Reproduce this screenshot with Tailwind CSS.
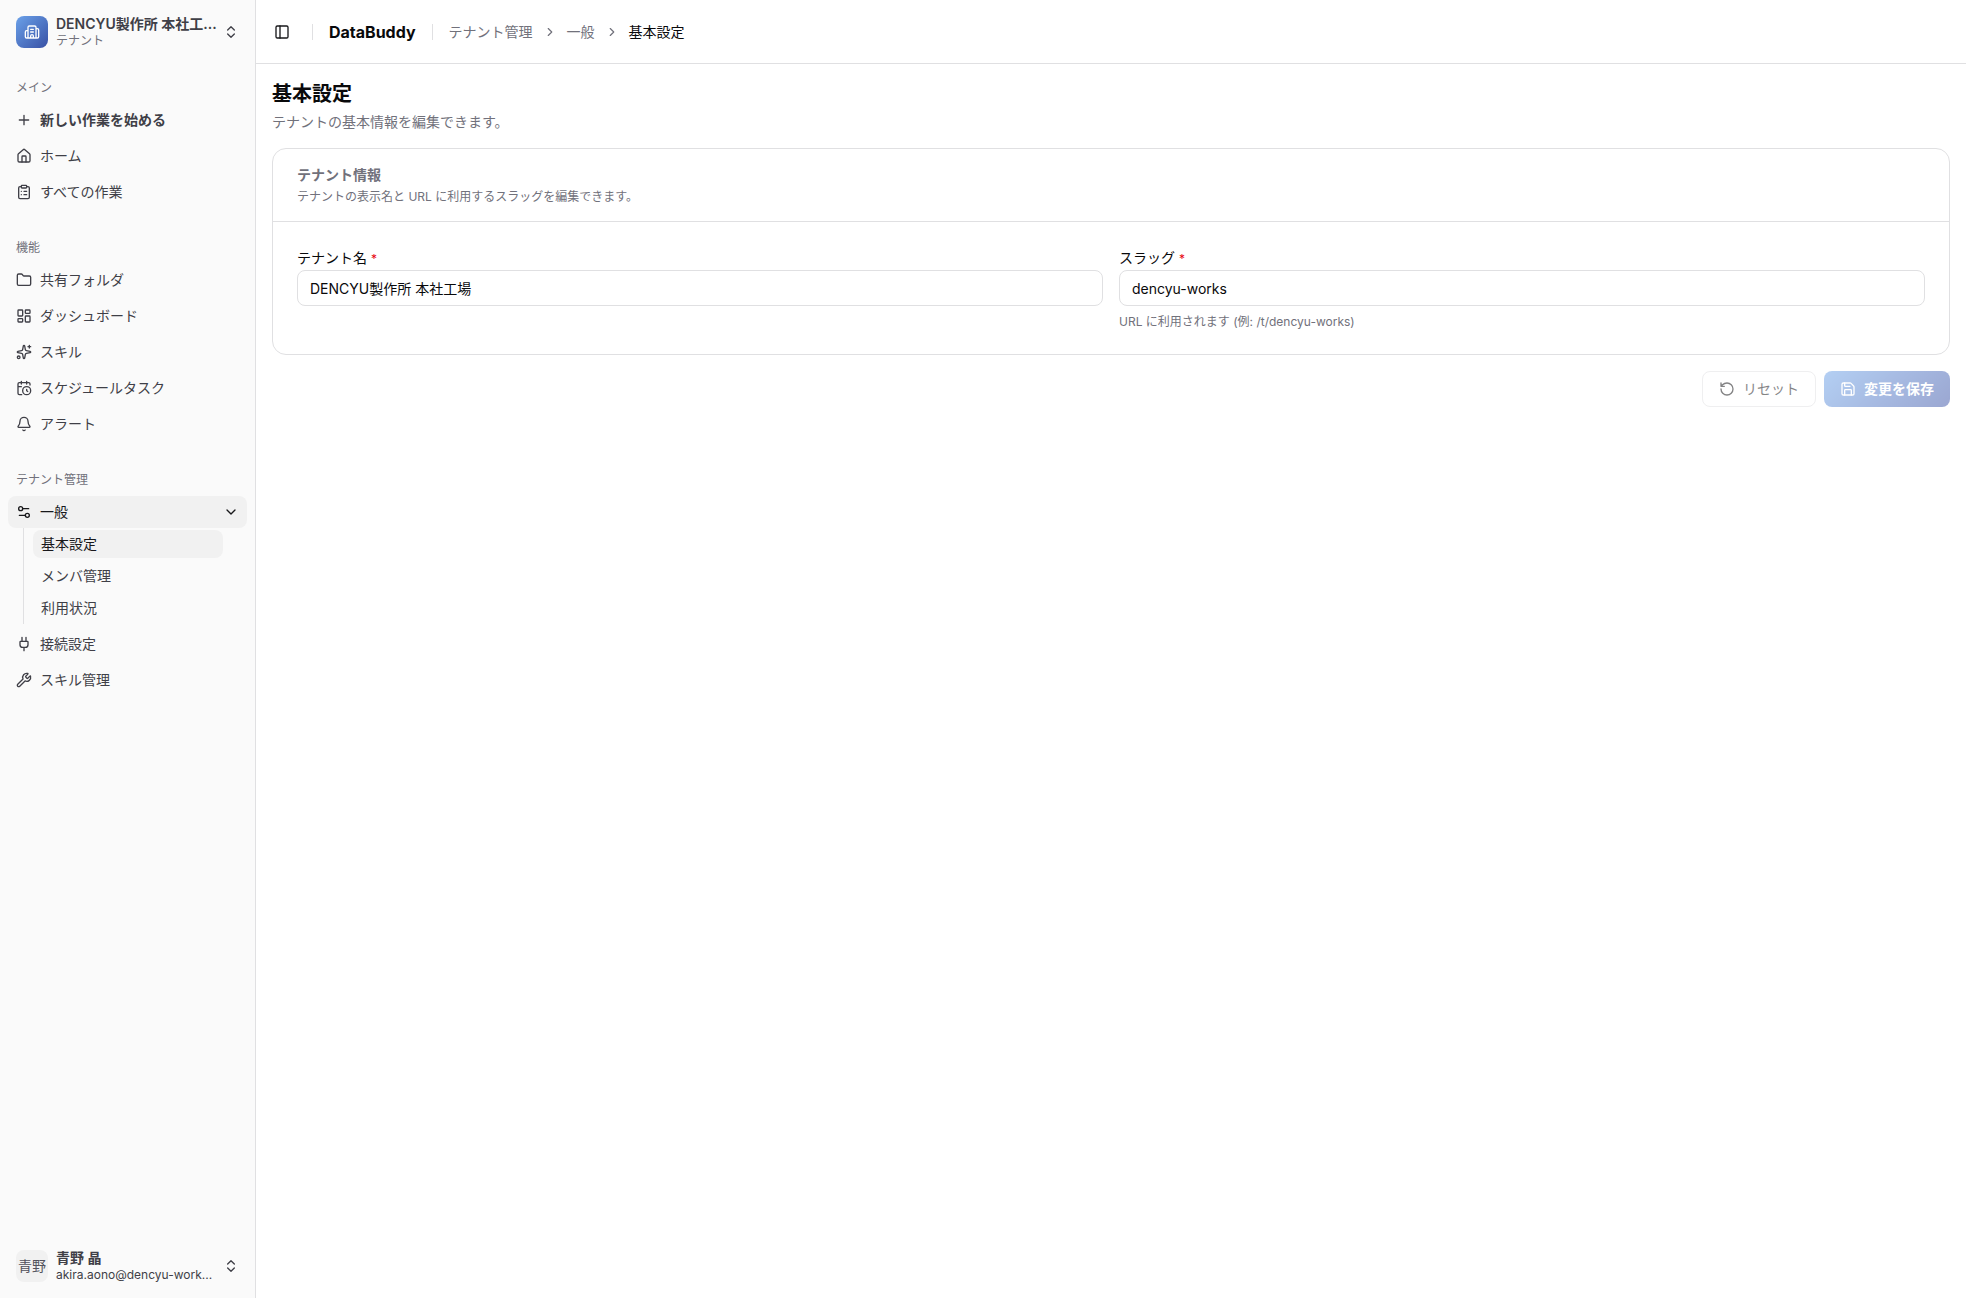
<!DOCTYPE html>
<html lang="ja">
<head>
    <meta charset="UTF-8">
    <meta name="viewport" content="width=device-width, initial-scale=1.0">
    <title>基本設定 - DataBuddy</title>
    <script src="https://cdn.jsdelivr.net/npm/@tailwindcss/browser@4"></script>
    <style>
        body {
            font-family: Inter, 'Noto Sans CJK JP', sans-serif;
        }
    </style>
</head>
<body class="flex min-h-screen bg-white text-sm text-zinc-950 antialiased">
    <!-- icon sprite -->
    <svg class="hidden" xmlns="http://www.w3.org/2000/svg">
        <symbol id="i-building" viewBox="0 0 24 24"><path d="M10 12h4M10 8h4M14 21v-3a2 2 0 0 0-4 0v3M6 10H4a2 2 0 0 0-2 2v7a2 2 0 0 0 2 2h16a2 2 0 0 0 2-2V9a2 2 0 0 0-2-2h-2M6 21V5a2 2 0 0 1 2-2h8a2 2 0 0 1 2 2v16"/></symbol>
        <symbol id="i-updown" viewBox="0 0 24 24"><path d="m7 15 5 5 5-5M7 9l5-5 5 5"/></symbol>
        <symbol id="i-plus" viewBox="0 0 24 24"><path d="M5 12h14M12 5v14"/></symbol>
        <symbol id="i-home" viewBox="0 0 24 24"><path d="M15 21v-8a1 1 0 0 0-1-1h-4a1 1 0 0 0-1 1v8"/><path d="M3 10a2 2 0 0 1 .709-1.528l7-6a2 2 0 0 1 2.582 0l7 6A2 2 0 0 1 21 10v9a2 2 0 0 1-2 2H5a2 2 0 0 1-2-2z"/></symbol>
        <symbol id="i-clipboard" viewBox="0 0 24 24"><rect width="8" height="4" x="8" y="2" rx="1"/><path d="M16 4h2a2 2 0 0 1 2 2v14a2 2 0 0 1-2 2H6a2 2 0 0 1-2-2V6a2 2 0 0 1 2-2h2M12 11h4M12 16h4M8 11h.01M8 16h.01"/></symbol>
        <symbol id="i-folder" viewBox="0 0 24 24"><path d="M20 20a2 2 0 0 0 2-2V8a2 2 0 0 0-2-2h-7.9a2 2 0 0 1-1.69-.9L9.6 3.9A2 2 0 0 0 7.93 3H4a2 2 0 0 0-2 2v13a2 2 0 0 0 2 2Z"/></symbol>
        <symbol id="i-dashboard" viewBox="0 0 24 24"><rect width="7" height="9" x="3" y="3" rx="1"/><rect width="7" height="5" x="14" y="3" rx="1"/><rect width="7" height="9" x="14" y="12" rx="1"/><rect width="7" height="5" x="3" y="16" rx="1"/></symbol>
        <symbol id="i-sparkles" viewBox="0 0 24 24"><path d="M11.017 2.814a1 1 0 0 1 1.966 0l1.051 5.558a2 2 0 0 0 1.594 1.594l5.558 1.051a1 1 0 0 1 0 1.966l-5.558 1.051a2 2 0 0 0-1.594 1.594l-1.051 5.558a1 1 0 0 1-1.966 0l-1.051-5.558a2 2 0 0 0-1.594-1.594l-5.558-1.051a1 1 0 0 1 0-1.966l5.558-1.051a2 2 0 0 0 1.594-1.594zM20 2v4M22 4h-4"/><circle cx="4" cy="20" r="2"/></symbol>
        <symbol id="i-calendar" viewBox="0 0 24 24"><path d="M16 14v2.2l1.6 1M16 2v4M21 7.5V6a2 2 0 0 0-2-2H5a2 2 0 0 0-2 2v14a2 2 0 0 0 2 2h3.5M3 10h5M8 2v4"/><circle cx="16" cy="16" r="6"/></symbol>
        <symbol id="i-bell" viewBox="0 0 24 24"><path d="M10.268 21a2 2 0 0 0 3.464 0M3.262 15.326A1 1 0 0 0 4 17h16a1 1 0 0 0 .74-1.673C19.41 13.956 18 12.499 18 8A6 6 0 0 0 6 8c0 4.499-1.411 5.956-2.738 7.326"/></symbol>
        <symbol id="i-settings" viewBox="0 0 24 24"><path d="M14 17H5M19 7h-9"/><circle cx="17" cy="17" r="3"/><circle cx="7" cy="7" r="3"/></symbol>
        <symbol id="i-down" viewBox="0 0 24 24"><path d="m6 9 6 6 6-6"/></symbol>
        <symbol id="i-right" viewBox="0 0 24 24"><path d="m9 18 6-6-6-6"/></symbol>
        <symbol id="i-plug" viewBox="0 0 24 24"><path d="M12 22v-5M15 8V2M17 8a1 1 0 0 1 1 1v4a4 4 0 0 1-4 4h-4a4 4 0 0 1-4-4V9a1 1 0 0 1 1-1zM9 8V2"/></symbol>
        <symbol id="i-wrench" viewBox="0 0 24 24"><path d="M14.7 6.3a1 1 0 0 0 0 1.4l1.6 1.6a1 1 0 0 0 1.4 0l3.106-3.105c.32-.322.863-.22.983.218a6 6 0 0 1-8.259 7.057l-7.91 7.91a1 1 0 0 1-2.999-3l7.91-7.91a6 6 0 0 1 7.057-8.259c.438.12.54.662.219.984z"/></symbol>
        <symbol id="i-panel" viewBox="0 0 24 24"><rect width="18" height="18" x="3" y="3" rx="2"/><path d="M9 3v18"/></symbol>
        <symbol id="i-reset" viewBox="0 0 24 24"><path d="M3 12a9 9 0 1 0 9-9 9.75 9.75 0 0 0-6.74 2.74L3 8M3 3v5h5"/></symbol>
        <symbol id="i-save" viewBox="0 0 24 24"><path d="M15.2 3a2 2 0 0 1 1.4.6l3.8 3.8a2 2 0 0 1 .6 1.4V19a2 2 0 0 1-2 2H5a2 2 0 0 1-2-2V5a2 2 0 0 1 2-2z"/><path d="M17 21v-7a1 1 0 0 0-1-1H8a1 1 0 0 0-1 1v7M7 3v4a1 1 0 0 0 1 1h7"/></symbol>
    </svg>

    <aside class="sticky top-0 flex h-screen w-64 shrink-0 flex-col border-r border-[#e0e0e2] bg-[#fafafa] text-zinc-700">
        <div class="p-2">
            <button type="button" class="flex h-12 w-full items-center rounded-lg p-2 text-left hover:bg-zinc-100">
                <span class="mr-2 flex size-8 shrink-0 items-center justify-center rounded-lg bg-linear-135 from-[#6ba1e9] to-[#3951a5] text-white">
                    <svg class="size-4 fill-none stroke-current stroke-2" stroke-linecap="round" stroke-linejoin="round"><use href="#i-building"/></svg>
                </span>
                <span class="grid min-w-0 flex-1">
                    <span class="leading-[18px] font-semibold whitespace-nowrap">DENCYU製作所 本社工...</span>
                    <span class="truncate text-xs text-zinc-500">テナント</span>
                </span>
                <svg class="size-4 shrink-0 fill-none stroke-current stroke-2" stroke-linecap="round" stroke-linejoin="round"><use href="#i-updown"/></svg>
            </button>
        </div>

        <nav class="flex flex-1 flex-col gap-2 overflow-y-auto">
            <section class="p-2">
                <h2 class="flex h-8 items-center px-2 text-xs text-zinc-500">メイン</h2>
                <ul class="flex flex-col gap-1">
                    <li><a href="#" class="flex h-8 items-center gap-2 rounded-lg px-2 font-semibold hover:bg-zinc-100"><svg class="size-4 fill-none stroke-current stroke-2" stroke-linecap="round" stroke-linejoin="round"><use href="#i-plus"/></svg>新しい作業を始める</a></li>
                    <li><a href="#" class="flex h-8 items-center gap-2 rounded-lg px-2 hover:bg-zinc-100"><svg class="size-4 fill-none stroke-current stroke-2" stroke-linecap="round" stroke-linejoin="round"><use href="#i-home"/></svg>ホーム</a></li>
                    <li><a href="#" class="flex h-8 items-center gap-2 rounded-lg px-2 hover:bg-zinc-100"><svg class="size-4 fill-none stroke-current stroke-2" stroke-linecap="round" stroke-linejoin="round"><use href="#i-clipboard"/></svg>すべての作業</a></li>
                </ul>
            </section>

            <section class="p-2">
                <h2 class="flex h-8 items-center px-2 text-xs text-zinc-500">機能</h2>
                <ul class="flex flex-col gap-1">
                    <li><a href="#" class="flex h-8 items-center gap-2 rounded-lg px-2 hover:bg-zinc-100"><svg class="size-4 fill-none stroke-current stroke-2" stroke-linecap="round" stroke-linejoin="round"><use href="#i-folder"/></svg>共有フォルダ</a></li>
                    <li><a href="#" class="flex h-8 items-center gap-2 rounded-lg px-2 hover:bg-zinc-100"><svg class="size-4 fill-none stroke-current stroke-2" stroke-linecap="round" stroke-linejoin="round"><use href="#i-dashboard"/></svg>ダッシュボード</a></li>
                    <li><a href="#" class="flex h-8 items-center gap-2 rounded-lg px-2 hover:bg-zinc-100"><svg class="size-4 fill-none stroke-current stroke-2" stroke-linecap="round" stroke-linejoin="round"><use href="#i-sparkles"/></svg>スキル</a></li>
                    <li><a href="#" class="flex h-8 items-center gap-2 rounded-lg px-2 hover:bg-zinc-100"><svg class="size-4 fill-none stroke-current stroke-2" stroke-linecap="round" stroke-linejoin="round"><use href="#i-calendar"/></svg>スケジュールタスク</a></li>
                    <li><a href="#" class="flex h-8 items-center gap-2 rounded-lg px-2 hover:bg-zinc-100"><svg class="size-4 fill-none stroke-current stroke-2" stroke-linecap="round" stroke-linejoin="round"><use href="#i-bell"/></svg>アラート</a></li>
                </ul>
            </section>

            <section class="p-2">
                <h2 class="flex h-8 items-center px-2 text-xs text-zinc-500">テナント管理</h2>
                <ul class="flex flex-col gap-1">
                    <li>
                        <button type="button" aria-expanded="true" class="flex h-8 w-full items-center gap-2 rounded-lg bg-[#f1f1f1] px-2 text-left text-zinc-900">
                            <svg class="size-4 fill-none stroke-current stroke-2" stroke-linecap="round" stroke-linejoin="round"><use href="#i-settings"/></svg>
                            <span class="flex-1">一般</span>
                            <svg class="size-4 fill-none stroke-current stroke-2" stroke-linecap="round" stroke-linejoin="round"><use href="#i-down"/></svg>
                        </button>
                        <ul class="mr-6 ml-[15px] flex flex-col gap-1 border-l border-[#e0e0e2] py-0.5 pl-[9px]">
                            <li><a href="#" aria-current="page" class="flex h-7 items-center rounded-lg bg-[#f1f1f1] px-2 text-zinc-900">基本設定</a></li>
                            <li><a href="#" class="flex h-7 items-center rounded-lg px-2 hover:bg-zinc-100">メンバ管理</a></li>
                            <li><a href="#" class="flex h-7 items-center rounded-lg px-2 hover:bg-zinc-100">利用状況</a></li>
                        </ul>
                    </li>
                    <li><a href="#" class="flex h-8 items-center gap-2 rounded-lg px-2 hover:bg-zinc-100"><svg class="size-4 fill-none stroke-current stroke-2" stroke-linecap="round" stroke-linejoin="round"><use href="#i-plug"/></svg>接続設定</a></li>
                    <li><a href="#" class="flex h-8 items-center gap-2 rounded-lg px-2 hover:bg-zinc-100"><svg class="size-4 fill-none stroke-current stroke-2" stroke-linecap="round" stroke-linejoin="round"><use href="#i-wrench"/></svg>スキル管理</a></li>
                </ul>
            </section>
        </nav>

        <div class="p-2">
            <button type="button" class="flex h-12 w-full items-center gap-2 rounded-lg p-2 text-left hover:bg-zinc-100">
                <span class="flex size-8 shrink-0 items-center justify-center rounded-lg bg-[#f1f1f1] text-zinc-600">青野</span>
                <span class="grid min-w-0 flex-1">
                    <span class="truncate leading-[18px] font-semibold">青野 晶</span>
                    <span class="text-xs whitespace-nowrap">akira.aono@dencyu-work...</span>
                </span>
                <svg class="size-4 shrink-0 fill-none stroke-current stroke-2" stroke-linecap="round" stroke-linejoin="round"><use href="#i-updown"/></svg>
            </button>
        </div>
    </aside>

    <div class="min-w-0 flex-1">
        <header class="flex h-16 items-center gap-4 border-b border-[#e0e0e2] px-3">
            <button type="button" aria-label="サイドバーを切り替え" class="flex size-7 items-center justify-center rounded-lg text-zinc-900 hover:bg-zinc-100">
                <svg class="size-4 fill-none stroke-current stroke-2" stroke-linecap="round" stroke-linejoin="round"><use href="#i-panel"/></svg>
            </button>
            <span class="h-4 w-px bg-[#e0e0e2]"></span>
            <a href="#" class="text-base font-bold">DataBuddy</a>
            <span class="h-4 w-px bg-[#e0e0e2]"></span>
            <nav>
                <ol class="flex items-center gap-2.5 text-zinc-500">
                    <li><a href="#" class="hover:text-zinc-950">テナント管理</a></li>
                    <li aria-hidden="true"><svg class="size-3.5 fill-none stroke-current stroke-2" stroke-linecap="round" stroke-linejoin="round"><use href="#i-right"/></svg></li>
                    <li><a href="#" class="hover:text-zinc-950">一般</a></li>
                    <li aria-hidden="true"><svg class="size-3.5 fill-none stroke-current stroke-2" stroke-linecap="round" stroke-linejoin="round"><use href="#i-right"/></svg></li>
                    <li aria-current="page" class="text-zinc-950">基本設定</li>
                </ol>
            </nav>
        </header>

        <main class="flex flex-col gap-4 p-4">
            <div>
                <h1 class="text-xl leading-7 font-bold">基本設定</h1>
                <p class="mt-1 text-zinc-500">テナントの基本情報を編集できます。</p>
            </div>

            <form class="flex flex-col gap-4">
                <section class="rounded-[14px] border border-[#e0e0e2]">
                    <div class="border-b border-[#e0e0e2] px-6 py-4 text-zinc-500">
                        <h2 class="font-semibold">テナント情報</h2>
                        <p class="mt-1 text-xs">テナントの表示名と URL に利用するスラッグを編集できます。</p>
                    </div>
                    <div class="grid grid-cols-2 gap-4 p-6">
                        <div>
                            <label for="tenant-name" class="block leading-6">テナント名 <span class="text-xs text-red-600">*</span></label>
                            <input id="tenant-name" type="text" value="DENCYU製作所 本社工場" required class="h-9 w-full rounded-lg border border-[#e0e0e2] px-3 outline-none focus:ring-2 focus:ring-blue-300">
                        </div>
                        <div>
                            <label for="tenant-slug" class="block leading-6">スラッグ <span class="text-xs text-red-600">*</span></label>
                            <input id="tenant-slug" type="text" value="dencyu-works" required class="h-9 w-full rounded-lg border border-[#e0e0e2] px-3 outline-none focus:ring-2 focus:ring-blue-300">
                            <p class="mt-2 text-xs text-zinc-500">URL に利用されます (例: /t/dencyu-works)</p>
                        </div>
                    </div>
                </section>

                <div class="flex justify-end gap-2">
                    <button type="reset" disabled class="flex h-9 items-center gap-2 rounded-lg border border-[#e0e0e2] px-4 disabled:opacity-50">
                        <svg class="size-4 fill-none stroke-current stroke-2" stroke-linecap="round" stroke-linejoin="round"><use href="#i-reset"/></svg>
                        リセット
                    </button>
                    <button type="submit" disabled class="flex h-9 items-center gap-2 rounded-lg bg-linear-135 from-[#6ba1e9] to-[#3951a5] px-4 font-semibold text-white disabled:opacity-50">
                        <svg class="size-4 fill-none stroke-current stroke-2" stroke-linecap="round" stroke-linejoin="round"><use href="#i-save"/></svg>
                        変更を保存
                    </button>
                </div>
            </form>
        </main>
    </div>
</body>
</html>
